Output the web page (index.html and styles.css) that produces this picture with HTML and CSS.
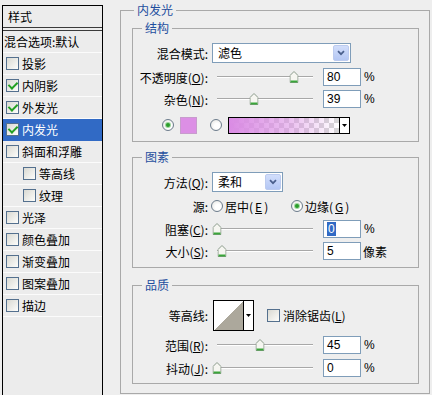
FILE: index.html
```html
<!DOCTYPE html>
<html lang="zh">
<head>
<meta charset="utf-8">
<title>图层样式 - 内发光</title>
<link rel="stylesheet" href="styles.css">
</head>
<body>
<div class="app">
  <aside class="styles">
    <div class="styles-head">样式</div>
    <ul class="style-list">
      <li class="item blend">混合选项:默认</li>
      <li class="item"><span class="cb"></span>投影</li>
      <li class="item"><span class="cb on"></span>内阴影</li>
      <li class="item"><span class="cb on"></span>外发光</li>
      <li class="item sel"><span class="cb on"></span>内发光</li>
      <li class="item"><span class="cb"></span>斜面和浮雕</li>
      <li class="item sub"><span class="cb"></span>等高线</li>
      <li class="item sub"><span class="cb"></span>纹理</li>
      <li class="item"><span class="cb"></span>光泽</li>
      <li class="item"><span class="cb"></span>颜色叠加</li>
      <li class="item"><span class="cb"></span>渐变叠加</li>
      <li class="item"><span class="cb"></span>图案叠加</li>
      <li class="item"><span class="cb"></span>描边</li>
    </ul>
  </aside>

  <fieldset class="outer">
    <legend class="lg-outer">内发光</legend>

    <fieldset class="grp g-struct">
      <legend class="lg-inner">结构</legend>
      <div class="row r-first">
        <label class="lbl">混合模式:</label>
        <div class="select w-blend"><span class="sel-text">滤色</span><span class="sel-btn"><svg width="8" height="6" viewBox="0 0 8 6"><path d="M1 1.2 L4 4.2 L7 1.2" fill="none" stroke="#4a5f8c" stroke-width="1.7"/></svg></span></div>
      </div>
      <div class="row r-slider r-after-select">
        <label class="lbl">不透明度(<u>O</u>):</label>
        <div class="slider"><div class="track"><svg class="thumb" style="left:80%" width="9" height="12" viewBox="0 0 9 12"><path d="M4.5 0.5 L8.5 4.5 V11.5 H0.5 V4.5 Z" fill="#f6f6f1" stroke="#8a9a8a"/><path d="M1 10.5 H8" stroke="#3aa53a" stroke-width="2"/></svg></div></div>
        <span class="num">80</span><span class="unit">%</span>
      </div>
      <div class="row r-slider">
        <label class="lbl">杂色(<u>N</u>):</label>
        <div class="slider"><div class="track"><svg class="thumb" style="left:39%" width="9" height="12" viewBox="0 0 9 12"><path d="M4.5 0.5 L8.5 4.5 V11.5 H0.5 V4.5 Z" fill="#f6f6f1" stroke="#8a9a8a"/><path d="M1 10.5 H8" stroke="#3aa53a" stroke-width="2"/></svg></div></div>
        <span class="num">39</span><span class="unit">%</span>
      </div>
      <div class="row r-color">
        <span class="radio on"></span>
        <span class="swatch"></span>
        <span class="radio r2"></span>
        <div class="grad"><span class="grad-fill"></span><span class="grad-btn"><svg width="5" height="3" viewBox="0 0 5 3"><path d="M0 0 H5 L2.5 3 Z" fill="#000"/></svg></span></div>
      </div>
    </fieldset>

    <fieldset class="grp g-elem">
      <legend class="lg-inner">图素</legend>
      <div class="row r-first">
        <label class="lbl">方法(<u>Q</u>):</label>
        <div class="select w-method"><span class="sel-text">柔和</span><span class="sel-btn"><svg width="8" height="6" viewBox="0 0 8 6"><path d="M1 1.2 L4 4.2 L7 1.2" fill="none" stroke="#4a5f8c" stroke-width="1.7"/></svg></span></div>
      </div>
      <div class="row r-src">
        <label class="lbl">源:</label>
        <span class="opt opt1"><span class="radio"></span>居中(<u>E</u>)</span>
        <span class="opt"><span class="radio on"></span>边缘(<u>G</u>)</span>
      </div>
      <div class="row r-slider r-choke">
        <label class="lbl">阻塞(<u>C</u>):</label>
        <div class="slider"><div class="track"><svg class="thumb" style="left:0%" width="9" height="12" viewBox="0 0 9 12"><path d="M4.5 0.5 L8.5 4.5 V11.5 H0.5 V4.5 Z" fill="#f6f6f1" stroke="#8a9a8a"/><path d="M1 10.5 H8" stroke="#3aa53a" stroke-width="2"/></svg></div></div>
        <span class="num"><span class="hl">0</span></span><span class="unit">%</span>
      </div>
      <div class="row r-slider">
        <label class="lbl">大小(<u>S</u>):</label>
        <div class="slider"><div class="track"><svg class="thumb" style="left:5%" width="9" height="12" viewBox="0 0 9 12"><path d="M4.5 0.5 L8.5 4.5 V11.5 H0.5 V4.5 Z" fill="#f6f6f1" stroke="#8a9a8a"/><path d="M1 10.5 H8" stroke="#3aa53a" stroke-width="2"/></svg></div></div>
        <span class="num">5</span><span class="unit cjk">像素</span>
      </div>
    </fieldset>

    <fieldset class="grp g-quality">
      <legend class="lg-inner">品质</legend>
      <div class="row r-contour">
        <label class="lbl">等高线:</label>
        <div class="contour"><span class="contour-prev"></span><span class="contour-btn"><svg width="5" height="3" viewBox="0 0 5 3"><path d="M0 0 H5 L2.5 3 Z" fill="#000"/></svg></span></div>
        <span class="cb aa"></span><span class="aa-text">消除锯齿(<u>L</u>)</span>
      </div>
      <div class="row r-slider r-range">
        <label class="lbl">范围(<u>R</u>):</label>
        <div class="slider"><div class="track"><svg class="thumb" style="left:45%" width="9" height="12" viewBox="0 0 9 12"><path d="M4.5 0.5 L8.5 4.5 V11.5 H0.5 V4.5 Z" fill="#f6f6f1" stroke="#8a9a8a"/><path d="M1 10.5 H8" stroke="#3aa53a" stroke-width="2"/></svg></div></div>
        <span class="num">45</span><span class="unit">%</span>
      </div>
      <div class="row r-slider r-jitter">
        <label class="lbl">抖动(<u>J</u>):</label>
        <div class="slider"><div class="track"><svg class="thumb" style="left:0%" width="9" height="12" viewBox="0 0 9 12"><path d="M4.5 0.5 L8.5 4.5 V11.5 H0.5 V4.5 Z" fill="#f6f6f1" stroke="#8a9a8a"/><path d="M1 10.5 H8" stroke="#3aa53a" stroke-width="2"/></svg></div></div>
        <span class="num">0</span><span class="unit">%</span>
      </div>
    </fieldset>
  </fieldset>
</div>
</body>
</html>
```

FILE: styles.css
```css
* { box-sizing: border-box; }
html, body { margin: 0; padding: 0; }
body {
  width: 432px;
  height: 395px;
  overflow: hidden;
  background: #eeeeee;
  color: #000;
  font-family: "Noto Sans CJK SC", "Noto Sans", sans-serif;
  font-size: 12px;
}
u { text-decoration: underline; text-underline-offset: 1px; }

.app { display: flex; align-items: flex-start; }

/* ---------- left style list ---------- */
.styles {
  flex: none;
  margin: 5px 0 0 2px;
  width: 101px;
  height: 400px;
  border: 1px solid #000;
  border-bottom: 0;
  background: #ececec;
}
.styles-head {
  height: 22px;
  line-height: 21px;
  padding-left: 5px;
  border-bottom: 1px solid #3a3a3a;
}
.style-list {
  list-style: none;
  margin: 2px 0 0;
  padding: 0;
  border-top: 1px solid #3a3a3a;
}
.item {
  height: 22px;
  display: flex;
  align-items: center;
  padding-left: 3px;
  border-bottom: 1px solid #fbfbfb;
  white-space: nowrap;
}
.item.blend { padding-left: 1px; }
.item.sub { padding-left: 20px; }
.item.sel { background: #316ac5; color: #fff; border-bottom-color: #316ac5; }

.cb {
  position: relative;
  flex: none;
  width: 13px;
  height: 13px;
  margin-right: 3px;
  border: 1px solid #54708e;
  background: linear-gradient(135deg, #d9d9d2, #fdfdfb);
}
.cb.on::after {
  content: "";
  position: absolute;
  left: 3px;
  top: 0px;
  width: 4px;
  height: 7px;
  border: solid #22a022;
  border-width: 0 2px 2px 0;
  transform: rotate(45deg);
}

/* ---------- group boxes ---------- */
fieldset { min-width: 0; }
.outer {
  flex: none;
  margin: 3px 0 0 17px;
  width: 310px;
  padding: 0 10px 9px 11px;
  border: 1px solid #a9a9a9;
}
legend {
  height: 14px;
  line-height: 14px;
  padding: 0 3px;
  color: #1f4e9e;
  font-size: 12px;
}
.lg-outer { margin-left: 2px; }
.lg-inner { margin-left: 9px; }

.grp {
  margin: 0;
  padding: 0 0 7px 0;
  border: 1px solid #a9a9a9;
}
.g-struct { margin-top: 4px; padding-bottom: 6px; }
.g-elem { margin-top: 8px; padding-bottom: 5px; }
.g-quality { margin-top: 10px; padding-bottom: 4px; }

/* ---------- rows ---------- */
.row { display: flex; align-items: center; white-space: nowrap; }
.lbl { flex: none; width: 75px; text-align: right; }

.r-first { height: 20px; margin-top: 8px; }
.r-slider { height: 22px; }
.r-after-select { margin-top: 3px; }
.r-src { height: 20px; margin-top: 4px; }
.r-choke { margin-top: 2px; }
.r-contour { height: 31px; margin-top: 8px; }
.r-range { margin-top: 3px; }
.r-jitter { margin-top: 1px; }

/* select */
.select {
  flex: none;
  margin-left: 4px;
  height: 20px;
  padding: 1px;
  display: flex;
  align-items: stretch;
  background: #fff;
  border: 1px solid #7f9db9;
}
.w-blend { width: 139px; }
.w-method { width: 71px; }
.sel-text { flex: 1; padding-left: 4px; line-height: 16px; }
.sel-btn {
  flex: none;
  width: 16px;
  display: flex;
  align-items: center;
  justify-content: center;
  background: linear-gradient(#d2defb, #b4c7f4);
  border: 1px solid #bccbef;
  border-radius: 2px;
}

/* slider */
.slider {
  position: relative;
  flex: none;
  width: 106px;
  height: 22px;
  margin-left: 4px;
  padding: 0 5px;
  display: flex;
  align-items: center;
}
.track {
  position: relative;
  flex: 1;
  height: 2px;
  border-top: 1px solid #a8a8a8;
  border-bottom: 1px solid #fff;
}
.thumb {
  position: absolute;
  top: 50%;
  transform: translate(-50%, -50%);
}

.num {
  flex: none;
  margin-left: 5px;
  width: 38px;
  height: 18px;
  padding-left: 3px;
  border: 1px solid #7f9db9;
  background: #fff;
  font-family: "Liberation Sans", Arial, sans-serif;
  font-size: 12px;
  line-height: 16px;
}
.hl {
  display: inline-block;
  background: #316ac5;
  color: #fff;
  line-height: 14px;
  padding: 0 1px;
}
.unit {
  margin-left: 3px;
  font-family: "Liberation Sans", Arial, sans-serif;
  font-size: 12px;
}
.unit.cjk { font-family: "Noto Sans CJK SC", sans-serif; margin-left: 2px; }

/* radios & colour row */
.radio {
  position: relative;
  flex: none;
  width: 12px;
  height: 12px;
  border-radius: 50%;
  border: 1px solid #6c7c8c;
  background: radial-gradient(circle at 60% 60%, #fff 30%, #e0e0dc 100%);
}
.radio.on::after {
  content: "";
  position: absolute;
  left: 3px;
  top: 3px;
  width: 4px;
  height: 4px;
  border-radius: 50%;
  background: #2b9d2b;
  box-shadow: 0 0 0 1px #9fd69f;
}
.r-color { height: 20px; margin-top: 5px; padding-left: 29px; }
.swatch {
  flex: none;
  width: 17px;
  height: 17px;
  margin-left: 6px;
  background: #dc8fe5;
  border: 1px solid #c89ccd;
}
.radio.r2 { margin-left: 13px; }
.grad {
  flex: none;
  margin-left: 6px;
  width: 122px;
  height: 17px;
  display: flex;
  border: 1px solid #000;
}
.grad-fill {
  flex: 1;
  background:
    linear-gradient(to right, #da8be4 0%, rgba(218, 139, 228, 0.55) 55%, rgba(218, 139, 228, 0) 100%),
    repeating-conic-gradient(#d6d6d6 0 25%, #ffffff 0 50%) 0 0 / 10px 10px;
}
.grad-btn,
.contour-btn {
  flex: none;
  width: 10px;
  display: flex;
  align-items: center;
  justify-content: center;
  background: #fff;
  border-left: 1px solid #000;
}

/* source options */
.opt { display: flex; align-items: center; gap: 2px; }
.opt1 { margin-left: 3px; width: 80px; }

/* contour */
.contour {
  flex: none;
  margin-left: 5px;
  width: 41px;
  height: 31px;
  display: flex;
  border: 1px solid #000;
}
.contour-prev {
  flex: 1;
  background: linear-gradient(to bottom right, #ffffff 50%, #aca89c 50%);
}
.cb.aa { margin-left: 13px; margin-right: 3px; }
```
